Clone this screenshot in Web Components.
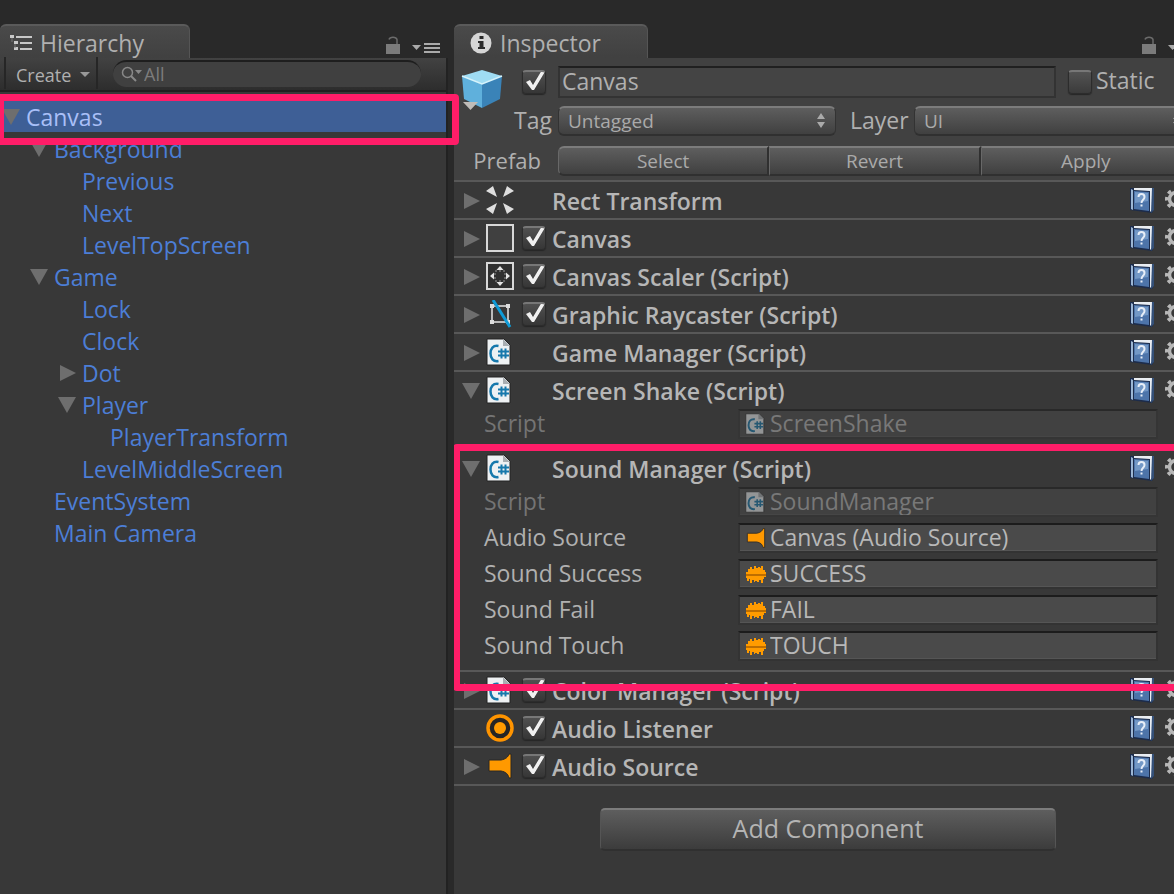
<!DOCTYPE html>
<html lang="en">
<head>
<meta charset="utf-8">
<title>Editor</title>
<style>
html, body { margin: 0; min-height: 100%; background: #292929; }
body { font-family: "Open Sans", "Noto Sans", sans-serif; font-size: 23px; color: #b0b0b0; overflow-x: hidden; }
</style>
</head>
<body>
<editor-window></editor-window>

<script>
const CHECK = `url("data:image/svg+xml,%3Csvg xmlns='http://www.w3.org/2000/svg' viewBox='0 0 24 24'%3E%3Cpath d='M4 12l4-2 3 5L20 0h4L12 20h-2z' fill='%23f0f0f0'/%3E%3C/svg%3E")`;

const BOX = `
  input[type=checkbox] { appearance: none; margin: 0; width: 24px; height: 24px; flex: none;
    border: 1px solid #2c2c2c; border-top: 2px solid #777; border-radius: 4px;
    background: linear-gradient(#555, #3a3a3a); box-sizing: border-box; background-origin: border-box; box-shadow: 0 1px 1px #262626; }
  input[type=checkbox]:checked { background: ${CHECK} border-box 0 0 / 24px 24px no-repeat, linear-gradient(#505050, #363636); }`;

const PAGE = `<path d="M2 1h17l6 6v20H2z" fill="#eef1f3" stroke="#222" stroke-width="1"/><path d="M18 1l7 7h-7z" fill="#a9aeb2"/>
  <path d="M13.500 8C8 7 5.500 11 5.500 15.500S8 24 13.500 23" fill="none" stroke="#1678ac" stroke-width="2.500"/>
  <path d="M16.500 10.500v10M20.500 10.500v10M13 13.500h11M13 17.500h11" stroke="#1678ac" stroke-width="2" fill="none"/>`;
const WAVE = `<path d="M1 9h2V6h2V4h2v2h2V3h2v2h2V4h2v1h1V3h2v4h2v2h1v5h-2v2h-1v4h-2v-3h-2v2h-2v-1h-2v1H9v-2H7v3H5v-4H4v2H2v-3H1z" fill="#ff9b00"/><path d="M1 12h20" stroke="#a85f00" stroke-width="1.500"/>`;

const ICONS = {
  tree: ['0 0 22 18', `<path d="M0 1h4v3H0zM4 7h4v3H4zM4 13h4v3H4zM6 2h16v2H6zM10 8h12v2H10zM10 14h12v2H10z" fill="#c8c8c8"/><path d="M2 4v4M5 10v4" stroke="#777"/>`],
  info: ['0 0 22 22', `<circle cx="11" cy="11" r="10.500" fill="#d6d6d6"/><path d="M9.500 4h4v3h-4zM8 9h5.500v6H15v2H8v-2h1.500v-4H8z" fill="#2a2a2a"/>`],
  lock: ['0 0 14 18', `<path d="M0 8h14v10H0z" fill="#7b7b7b"/><path d="M3 3.500C4 .500 10 .500 11 3.500V8" fill="none" stroke="#6b6b6b" stroke-width="1.500"/>`],
  menu: ['0 0 28 12', `<path d="M0 3h9l-4.500 5z" fill="#aaa"/><path d="M12 2h16M12 6h16M12 10h16" stroke="#aaa" stroke-width="2"/>`],
  caret: ['0 0 10 6', `<path d="M0 0h10L5 5z" fill="#999"/>`],
  search: ['0 0 22 16', `<circle cx="6.500" cy="6.500" r="5" fill="none" stroke="#888" stroke-width="1.500"/><path d="M10 10l5 5" stroke="#888" stroke-width="2"/><path d="M14 4h7l-3.500 4z" fill="#888"/>`],
  right: ['0 0 18 18', `<path d="M2 2l16 8-16 8z" fill="#6e6e6e"/>`],
  down: ['0 0 18 18', `<path d="M0 2h18L9 18z" fill="#6e6e6e"/>`],
  cube: ['0 0 42 42', `<path d="M21 1l20 6-20 8L1 7z" fill="#9fdcf3"/><path d="M1 7l20 8v24L3 30z" fill="#5fb0dc"/><path d="M41 7l-20 8v24l18-9z" fill="#3a83b8"/><path d="M1 7l20 8 20-8" fill="none" stroke="#d5f3fc" stroke-width="1.500"/><path d="M2 33h15l-7.500 8z" fill="#c0bcb8"/>`],
  rect: ['0 0 28 28', `<path d="M0 5l7-5 4 11zM28 5l-7-5-4 11zM0 23l7 5 4-11zM28 23l-7 5-4-11z" fill="#dedede"/>`],
  canvas: ['0 0 28 28', `<path d="M1 1h26v26H1z" fill="#404040" stroke="#d8d8d8" stroke-width="2"/>`],
  scaler: ['0 0 28 28', `<path d="M1 1h26v26H1z" fill="#303030" stroke="#d8d8d8" stroke-width="2"/><path d="M10.500 8l3.500-4 3.500 4zM10.500 20l3.500 4 3.500-4zM8 10.500L4 14l4 3.500zM20 10.500l4 3.500-4 3.500z" fill="#e4e4e4"/><path d="M9 9h10v10H9z" fill="none" stroke="#999" stroke-dasharray="2 2"/>`],
  ray: ['0 0 28 28', `<path d="M6 6h16v16H6z" fill="none" stroke="#bbb" stroke-width="2"/><path d="M4 4h4v4H4zM20 4h4v4h-4zM4 20h4v4H4zM20 20h4v4h-4z" fill="#ddd"/><path d="M7 0l17 27" stroke="#0f9bd7" stroke-width="3"/>`],
  script: ['1 0 28 28', PAGE],
  listener: ['0 0 28 28', `<circle cx="14" cy="14" r="12" fill="#252525" stroke="#ff9400" stroke-width="3.500"/><circle cx="14" cy="14" r="6" fill="#ff9b00"/>`],
  speaker: ['0 0 28 28', `<path d="M3 8h12c5-1 7-3 8-6h2v24h-2c-1-4-3-6-8-7H3z" fill="#ff9900" stroke="#262626"/>`],
  wave: ['0 0 22 22', WAVE],
  book: ['0 0 24 26', `<path d="M0 1h24v22l-2 3L0 23z" fill="#1c2c4c"/><path d="M4 1h18v22l-2 2V4L4 3z" fill="#e9edf2"/><path d="M22 1h2v22l-3 3z" fill="#345078"/><path d="M1 2l2 1v20l-2-1z" fill="#9cb6d4"/><path d="M4 4l15 1v19L4 22z" fill="#4d74aa"/><path d="M5 5l13 1v8L5 16z" fill="#7398c6"/><path d="M8.500 10c0-4 6-4 6 0 0 3-3 2.500-3 6M10.500 18.500h2" fill="none" stroke="#e8eef8" stroke-width="2"/>`],
  gear: ['0 0 24 24', `<circle cx="12" cy="11" r="6.500" fill="none" stroke="#b8b8b8" stroke-width="3.500"/><circle cx="12" cy="11" r="9.500" fill="none" stroke="#b8b8b8" stroke-width="3" stroke-dasharray="3.700 3.760" stroke-dashoffset="1.850"/>`],
};

class UiIcon extends HTMLElement {
  connectedCallback() {
    const [box, art] = ICONS[this.getAttribute('name')];
    this.attachShadow({ mode: 'open' }).innerHTML = `
      <style>:host { display: block; flex: none; } svg { display: block; width: 100%; height: 100%; }</style>
      <svg viewBox="${box}" aria-hidden="true">${art}</svg>`;
  }
}

class HighlightFrame extends HTMLElement {
  connectedCallback() {
    this.attachShadow({ mode: 'open' }).innerHTML = `
      <style>:host { display: block; position: absolute; box-sizing: border-box; border: 7px solid #ff1d68; border-radius: 4px; pointer-events: none; z-index: 5; }</style>`;
  }
}

class TabBar extends HTMLElement {
  connectedCallback() {
    this.attachShadow({ mode: 'open' }).innerHTML = `
      <style>
        :host { display: flex; align-items: flex-end; height: 34px; padding-top: 24px; border-bottom: 2px solid #202020; margin-bottom: -2px; }
        .tab { display: flex; align-items: center; gap: 8px; box-sizing: border-box; height: 36px; width: var(--tab-width); padding: 0 0 0 var(--tab-pad);
          margin-bottom: -2px; background: linear-gradient(#4a4a4a, #404040); border-top: 2px solid #5a5a5a; border-right: 1px solid #555; border-radius: 6px 6px 0 0; white-space: nowrap; }
        .tools { margin-left: auto; display: flex; align-items: flex-end; gap: 12px; padding: 0 var(--tools-pad) 4px 0; }
      </style>
      <div class="tab"><slot name="icon"></slot><slot></slot></div>
      <div class="tools"><ui-icon name="lock" style="width:14px;height:18px"></ui-icon><ui-icon name="menu" style="width:28px;height:12px"></ui-icon></div>`;
  }
}

class TreeItem extends HTMLElement {
  connectedCallback() {
    const state = this.getAttribute('state');
    this.attachShadow({ mode: 'open' }).innerHTML = `
      <style>
        :host { display: flex; align-items: center; height: 32px; position: relative; color: #4c7ed6; padding-left: calc(2px + 28px * var(--depth, 0)); }
        :host([selected]) { background: #3e5f96; color: #a9bff8; }
        .mark { width: 18px; height: 18px; margin-right: 6px; flex: none; }
        .name { line-height: 32px; white-space: nowrap; padding-top: 2px; }
      </style>
      <span class="mark">${state ? `<ui-icon name="${state}" style="width:18px;height:18px"></ui-icon>` : ''}</span>
      <span class="name"><slot></slot></span>
      <slot name="frame"></slot>`;
    this.style.setProperty('--depth', this.getAttribute('depth') || 0);
  }
}

class HierarchyPanel extends HTMLElement {
  connectedCallback() {
    const rows = [
      [1, 'down', 'Background'], [2, '', 'Previous'], [2, '', 'Next'], [2, '', 'LevelTopScreen'],
      [1, 'down', 'Game'], [2, '', 'Lock'], [2, '', 'Clock'], [2, 'right', 'Dot'], [2, 'down', 'Player'],
      [3, '', 'PlayerTransform'], [2, '', 'LevelMiddleScreen'], [1, '', 'EventSystem'], [1, '', 'Main Camera']];
    this.attachShadow({ mode: 'open' }).innerHTML = `
      <style>
        :host { display: flex; flex-direction: column; }
        tab-bar { --tab-width: 190px; --tab-pad: 10px; --tools-pad: 8px; }
        .bar { display: flex; align-items: center; box-sizing: border-box; height: 34px; padding: 0 25px 2px 4px; background: linear-gradient(#424242, #2d2d2d); border-bottom: 2px solid #202020; border-right: 2px solid #222; }
        button { display: flex; align-items: center; justify-content: space-between; width: 94px; height: 32px; padding: 4px 6px 0 10px; background: none; border: solid #262626; border-width: 0 2px; color: #b0b0b0; font: 18px "Open Sans", sans-serif; box-sizing: border-box; }
        .search { display: flex; align-items: center; gap: 1px; flex: 1; min-width: 0; height: 27px; box-sizing: border-box; margin-left: 15px; padding-left: 8px; border-radius: 14px; background: #404040; border-top: 2px solid #1e1e1e; }
        input { min-width: 0; flex: 1; padding: 0; margin: 0; border: 0; outline: 0; background: none; color: #7c7c7c; font: 18px "Open Sans", sans-serif; }
        input::placeholder { color: #7c7c7c; opacity: 1; }
        .list { flex: 1; padding-top: 8px; background: #383838; border-right: 2px solid #222; }
        highlight-frame { left: -3px; right: -13px; top: -6px; bottom: -13px; }
      </style>
      <tab-bar><ui-icon slot="icon" name="tree" style="width:22px;height:18px"></ui-icon>Hierarchy</tab-bar>
      <div class="bar">
        <button type="button">Create <ui-icon name="caret" style="width:10px;height:6px"></ui-icon></button>
        <div class="search"><ui-icon name="search" style="width:22px;height:16px"></ui-icon><input type="text" aria-label="Search" placeholder="All"></div>
      </div>
      <div class="list">
        <tree-item selected state="down">Canvas<highlight-frame slot="frame"></highlight-frame></tree-item>
        ${rows.map(([d, s, t]) => `<tree-item depth="${d}" state="${s}">${t}</tree-item>`).join('')}
      </div>`;
  }
}

class ObjectField extends HTMLElement {
  connectedCallback() {
    const a = n => this.getAttribute(n);
    const off = this.hasAttribute('disabled');
    this.attachShadow({ mode: 'open' }).innerHTML = `
      <style>
        :host { display: grid; grid-template-columns: 254px 1fr; align-items: start; height: 35px; padding: 1px 44px 0 30px; }
        label { line-height: 28px; }
        .box { display: flex; align-items: center; gap: 3px; box-sizing: border-box; height: 30px; padding-left: 5px; background: #4a4a4a; border: 2px solid #333; border-top-color: #1c1c1c; box-shadow: inset 0 -1px #555; }
        input { flex: 1; min-width: 0; padding: 0 0 2px; height: 26px; box-sizing: border-box; border: 0; outline: 0; background: none; color: #b8b8b8; font: 23px/24px "Open Sans", sans-serif; }
        :host([disabled]) label { color: #747474; }
        :host([disabled]) .box { opacity: .5; }
        ui-icon { width: 22px; height: 22px; }
      </style>
      <label for="v">${a('label')}</label>
      <div class="box"><ui-icon name="${a('icon')}"></ui-icon><input id="v" type="text" readonly ${off ? 'disabled' : ''} value="${a('value')}"></div>`;
  }
}

class ComponentSection extends HTMLElement {
  connectedCallback() {
    const a = n => this.getAttribute(n);
    this.attachShadow({ mode: 'open' }).innerHTML = `
      <style>
        :host { display: block; position: relative; border-top: 2px solid #585858; }
        .head { display: grid; grid-template-columns: 18px 28px 26px 1fr 28px 24px; column-gap: 6px; align-items: center; height: 36px; padding: 0 14px 0 8px; }
        .icon { width: 28px; height: 28px; }
        .head input { justify-self: end; }
        label, h2 { margin: 0; font-size: 23px; font-weight: 600; line-height: 34px; padding-top: 2px; color: #b6b6b6; white-space: nowrap; }
        .body { padding-bottom: 4px; }
        :host(:not([open])) .body { display: none; }
        ${BOX}
      </style>
      <div class="head">
        <span>${a('fold') === 'none' ? '' : `<ui-icon name="${this.hasAttribute('open') ? 'down' : 'right'}" style="width:18px;height:18px"></ui-icon>`}</span>
        <ui-icon class="icon" name="${a('icon')}"></ui-icon>
        ${this.hasAttribute('enabled') ? `<input id="on" type="checkbox" checked><label for="on">${a('name')}</label>` : `<span></span><h2>${a('name')}</h2>`}
        <ui-icon name="book" style="width:24px;height:26px"></ui-icon>
        <ui-icon name="gear" style="width:24px;height:24px"></ui-icon>
      </div>
      <div class="body"><slot></slot></div>
      <slot name="frame"></slot>`;
  }
}

class ObjectHeader extends HTMLElement {
  connectedCallback() {
    this.attachShadow({ mode: 'open' }).innerHTML = `
      <style>
        :host { display: grid; grid-template-columns: 60px 44px 1fr; grid-template-rows: 32px 32px 32px; row-gap: 8px; padding: 8px 10px 2px 0; background: #414141; }
        .cube { grid-row: 1 / 3; width: 42px; height: 42px; margin: 3px 0 0 7px; }
        .on { margin: 4px 0 0 8px; }
        .row { display: flex; align-items: flex-start; min-width: 0; grid-column: 3; }
        .cap { line-height: 28px; text-align: right; padding-right: 9px; }
        .wide { grid-column: 1 / 3; padding-right: 17px; font-size: 22px; }
        ${BOX}
        .on input { display: block; }
        #name { flex: 1; min-width: 0; height: 32px; box-sizing: border-box; margin: 0 12px 0 0; padding: 0 0 2px 2px; background: #444; border: 2px solid #333; border-top-color: #202020; color: #b0b0b0; font: 23px/26px "Open Sans", sans-serif; outline: 0; }
        .static { display: flex; align-items: center; width: 124px; gap: 4px; line-height: 28px; }
        .static input { margin-top: 4px; }
        .static ui-icon { margin-left: auto; }
        .pick { flex: 1 1 0; min-width: 0; position: relative; }
        select, button { font: 19px "Open Sans", sans-serif; color: #aaa; height: 30px; box-sizing: border-box; margin: 0; background: linear-gradient(#5e5e5e, #404040); border: 1px solid #333; border-top: 2px solid #7c7c7c; border-bottom: 2px solid #303030; }
        select { appearance: none; width: 100%; display: block; padding: 0 0 2px 9px; border-radius: 6px; outline: 0; }
        .pick svg { position: absolute; right: 11px; top: 7px; width: 8px; height: 15px; }
        .layer { box-sizing: border-box; width: 78px; padding-left: 14px; line-height: 28px; }
        button { flex: 1 1 0; padding: 0 0 2px; border-left-color: #686868; border-right: 2px solid #303030; }
        button:first-child { border-radius: 6px 0 0 6px; }
        button:last-child { border-radius: 0 6px 6px 0; }
      </style>
      <ui-icon class="cube" name="cube"></ui-icon>
      <div class="on"><input type="checkbox" checked aria-label="Active"></div>
      <div class="row">
        <input id="name" type="text" value="Canvas" aria-label="Name">
        <div class="static"><input id="static" type="checkbox"><label for="static">Static</label><ui-icon name="caret" style="width:20px;height:6px"></ui-icon></div>
      </div>
      <label class="cap" for="tag">Tag</label>
      <div class="row">
        <div class="pick"><select id="tag"><option>Untagged</option></select><svg viewBox="0 0 8 15"><path d="M0 6h8L4 0zM0 9h8l-4 6z" fill="#aaa"/></svg></div>
        <label class="layer" for="layer">Layer</label>
        <div class="pick"><select id="layer"><option>UI</option></select><svg viewBox="0 0 8 15"><path d="M0 6h8L4 0zM0 9h8l-4 6z" fill="#aaa"/></svg></div>
      </div>
      <span class="cap wide">Prefab</span>
      <div class="row"><button type="button">Select</button><button type="button">Revert</button><button type="button">Apply</button></div>`;
  }
}

class InspectorPanel extends HTMLElement {
  connectedCallback() {
    this.attachShadow({ mode: 'open' }).innerHTML = `
      <style>
        :host { display: block; overflow: hidden; min-width: 0; }
        .content { display: flex; flex-direction: column; width: calc(100% + 28px); min-height: 100vh; }
        tab-bar { --tab-width: 194px; --tab-pad: 16px; --tools-pad: 6px; }
        .list { flex: 1; background: #383838; }
        .end { border-top: 2px solid #585858; padding: 22px 0 40px; text-align: center; }
        .end button { width: 456px; height: 43px; padding: 0 0 4px; font: 25px "Open Sans", sans-serif; color: #b4b4b4; background: linear-gradient(#5e5e5e, #3c3c3c); border: 1px solid #555; border-top: 2px solid #7c7c7c; border-bottom: 2px solid #303030; border-radius: 5px; box-sizing: border-box; }
        highlight-frame { left: -1px; right: -8px; top: -6px; bottom: -21px; }
      </style>
      <div class="content">
        <tab-bar><ui-icon slot="icon" name="info" style="width:22px;height:26px"></ui-icon>Inspector</tab-bar>
        <object-header></object-header>
        <div class="list">
          <component-section name="Rect Transform" icon="rect"></component-section>
          <component-section name="Canvas" icon="canvas" enabled></component-section>
          <component-section name="Canvas Scaler (Script)" icon="scaler" enabled></component-section>
          <component-section name="Graphic Raycaster (Script)" icon="ray" enabled></component-section>
          <component-section name="Game Manager (Script)" icon="script"></component-section>
          <component-section name="Screen Shake (Script)" icon="script" open>
            <object-field label="Script" icon="script" value="ScreenShake" disabled></object-field>
          </component-section>
          <component-section name="Sound Manager (Script)" icon="script" open>
            <object-field label="Script" icon="script" value="SoundManager" disabled></object-field>
            <object-field label="Audio Source" icon="speaker" value="Canvas (Audio Source)"></object-field>
            <object-field label="Sound Success" icon="wave" value="SUCCESS"></object-field>
            <object-field label="Sound Fail" icon="wave" value="FAIL"></object-field>
            <object-field label="Sound Touch" icon="wave" value="TOUCH"></object-field>
            <highlight-frame slot="frame"></highlight-frame>
          </component-section>
          <component-section name="Color Manager (Script)" icon="script" enabled></component-section>
          <component-section name="Audio Listener" icon="listener" fold="none" enabled></component-section>
          <component-section name="Audio Source" icon="speaker" enabled></component-section>
          <div class="end"><button type="button">Add Component</button></div>
        </div>
      </div>`;
  }
}

class EditorWindow extends HTMLElement {
  connectedCallback() {
    this.attachShadow({ mode: 'open' }).innerHTML = `
      <style>
        :host { display: grid; grid-template-columns: 448px minmax(0, 1fr); column-gap: 6px; min-height: 100vh; }
        hierarchy-panel { position: relative; z-index: 2; }
      </style>
      <hierarchy-panel></hierarchy-panel>
      <inspector-panel></inspector-panel>`;
  }
}

customElements.define('ui-icon', UiIcon);
customElements.define('highlight-frame', HighlightFrame);
customElements.define('tab-bar', TabBar);
customElements.define('tree-item', TreeItem);
customElements.define('hierarchy-panel', HierarchyPanel);
customElements.define('object-field', ObjectField);
customElements.define('component-section', ComponentSection);
customElements.define('object-header', ObjectHeader);
customElements.define('inspector-panel', InspectorPanel);
customElements.define('editor-window', EditorWindow);
</script>
</body>
</html>
